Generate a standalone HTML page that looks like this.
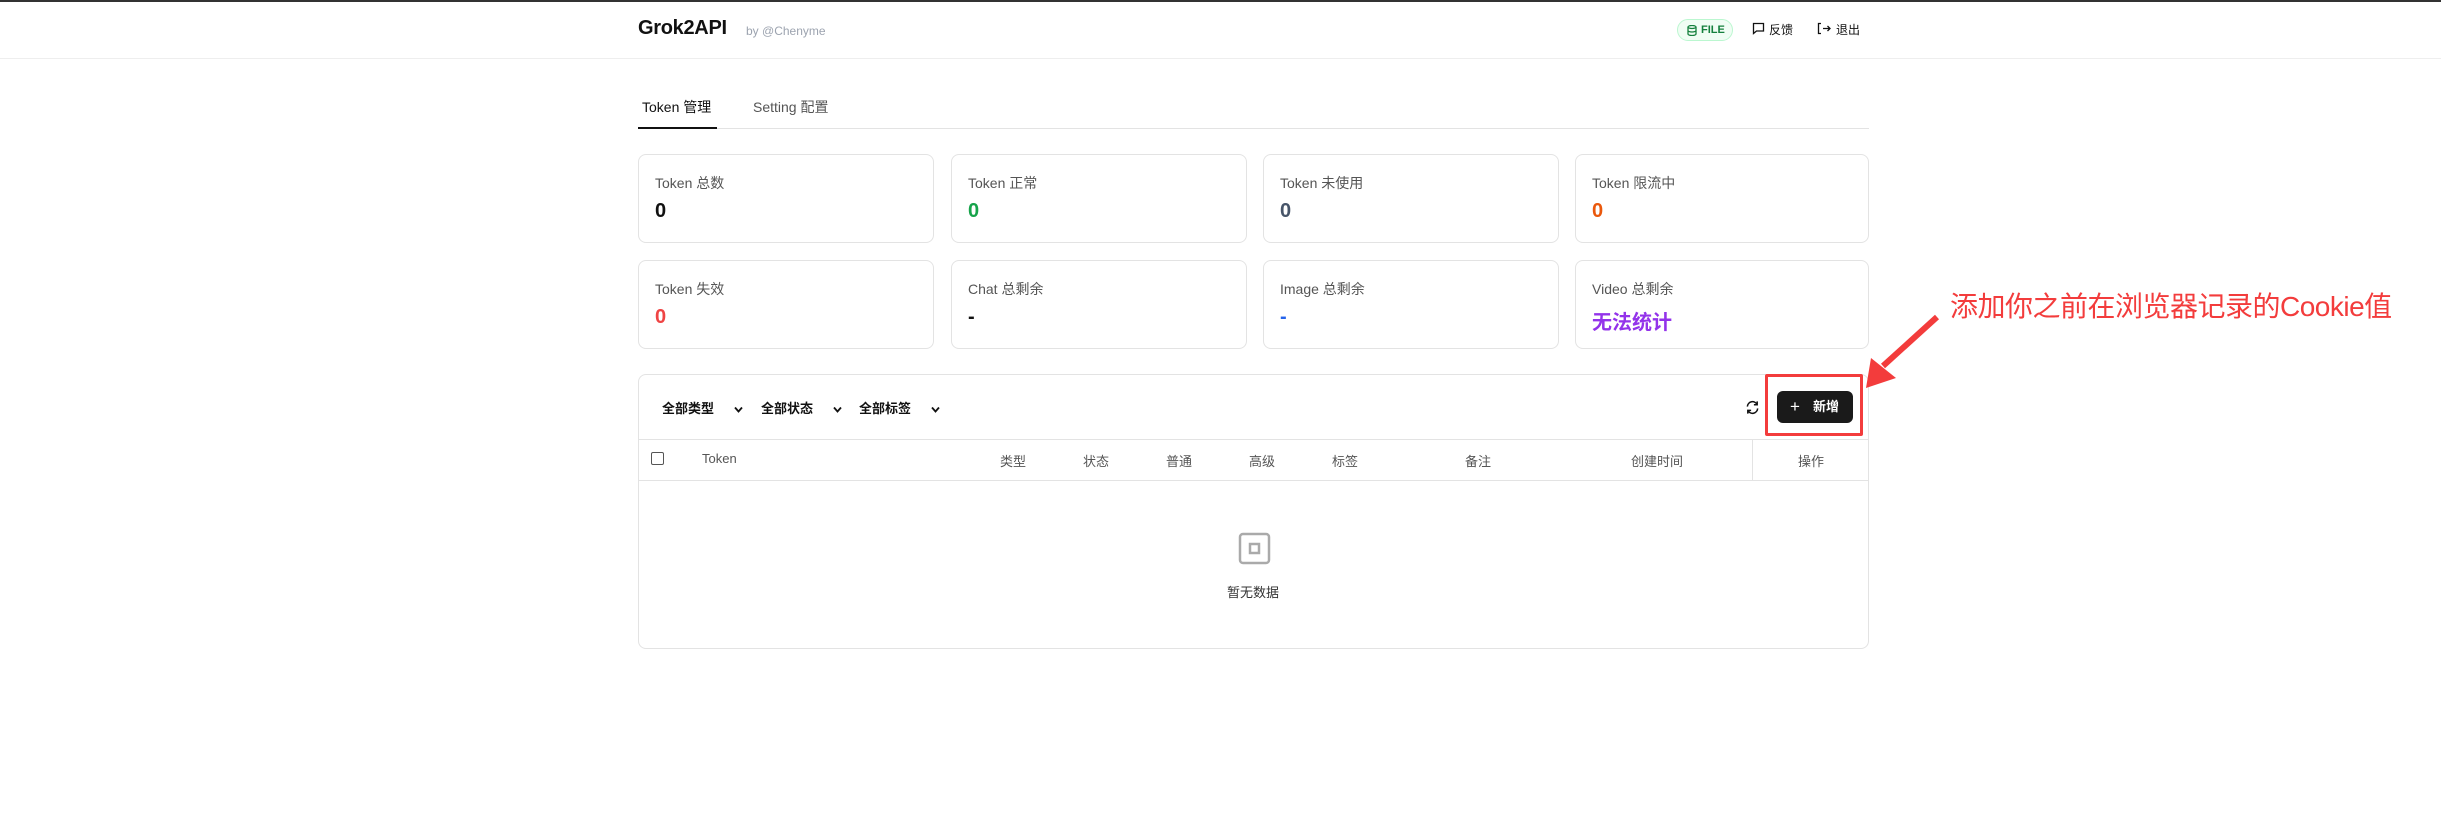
<!DOCTYPE html>
<html><head><meta charset="utf-8"><style>
*{margin:0;padding:0;box-sizing:border-box}
body{width:2441px;height:829px;background:#fff;position:relative;overflow:hidden;font-family:"Liberation Sans","Noto Sans CJK SC",sans-serif;color:#111}
.a{position:absolute;white-space:nowrap}
.card{position:absolute;border:1px solid #e3e3e3;border-radius:8px;background:#fff;width:296px;height:89px}
.card .l{position:absolute;left:16px;top:18px;font-size:14px;color:#555}
.card .v{position:absolute;left:16px;top:45px;font-size:20px;font-weight:bold}
.th{position:absolute;top:451px;font-size:13px;color:#555}
.chev{position:absolute;top:8px}
</style></head><body>
<div class="a" style="left:0;top:0;width:2441px;height:2px;background:#333"></div>
<div class="a" style="left:0;top:58px;width:2441px;height:1px;background:#eee"></div>
<div class="a" style="left:638px;top:17px;font-size:20px;font-weight:bold;letter-spacing:-0.3px">Grok2API</div>
<div class="a" style="left:746px;top:24px;font-size:12px;color:#9ca3af">by @Chenyme</div>
<div class="a" style="left:1677px;top:19px;width:56px;height:22px;border:1px solid #bbf7d0;background:#f0fdf4;border-radius:11px;color:#15803d;font-size:11px;font-weight:bold;padding-left:23px;line-height:20px">FILE
<svg style="position:absolute;left:9px;top:5px" width="10" height="11" viewBox="0 0 10 11" fill="none" stroke="#15803d" stroke-width="1.3"><ellipse cx="5" cy="2" rx="4" ry="1.5"/><path d="M1 2v7c0 .8 1.8 1.5 4 1.5s4-.7 4-1.5V2M1 5.5c0 .8 1.8 1.5 4 1.5s4-.7 4-1.5"/></svg></div>
<svg class="a" style="left:1752px;top:22px" width="13" height="13" viewBox="0 0 13 13" fill="none" stroke="#111" stroke-width="1.3"><path d="M1.5 1.5h10v7.5h-7l-3 2.5z"/></svg>
<div class="a" style="left:1769px;top:21px;font-size:12px">反馈</div>
<svg class="a" style="left:1817px;top:22px" width="14" height="13" viewBox="0 0 14 13" fill="none" stroke="#111" stroke-width="1.3"><path d="M4 1.5H1.5v10H4M6 6.5h7M10.5 4l2.5 2.5-2.5 2.5"/></svg>
<div class="a" style="left:1836px;top:21px;font-size:12px">退出</div>

<div class="a" style="left:642px;top:97px;font-size:14px;color:#111">Token 管理</div>
<div class="a" style="left:753px;top:97px;font-size:14px;color:#555">Setting 配置</div>
<div class="a" style="left:638px;top:128px;width:1231px;height:1px;background:#e3e3e3"></div>
<div class="a" style="left:638px;top:127px;width:79px;height:2px;background:#111"></div>

<div class="card" style="left:638px;top:154px"><div class="l">Token 总数</div><div class="v">0</div></div>
<div class="card" style="left:951px;top:154px"><div class="l">Token 正常</div><div class="v" style="color:#16a34a">0</div></div>
<div class="card" style="left:1263px;top:154px"><div class="l">Token 未使用</div><div class="v" style="color:#475569">0</div></div>
<div class="card" style="left:1575px;top:154px;width:294px"><div class="l">Token 限流中</div><div class="v" style="color:#ea580c">0</div></div>
<div class="card" style="left:638px;top:260px"><div class="l">Token 失效</div><div class="v" style="color:#ef4444">0</div></div>
<div class="card" style="left:951px;top:260px"><div class="l">Chat 总剩余</div><div class="v">-</div></div>
<div class="card" style="left:1263px;top:260px"><div class="l">Image 总剩余</div><div class="v" style="color:#2563eb">-</div></div>
<div class="card" style="left:1575px;top:260px;width:294px"><div class="l">Video 总剩余</div><div class="v" style="color:#9333ea">无法统计</div></div>

<div class="a" style="left:638px;top:374px;width:1231px;height:275px;border:1px solid #e3e3e3;border-radius:8px"></div>
<div class="a" style="left:638px;top:439px;width:1231px;height:1px;background:#e3e3e3"></div>
<div class="a" style="left:638px;top:480px;width:1231px;height:1px;background:#e3e3e3"></div>
<div class="a" style="left:1752px;top:440px;width:1px;height:40px;background:#e3e3e3"></div>
<div class="a" style="left:662px;top:398px;font-size:13px;font-weight:bold;width:90px;height:20px">全部类型<svg class="chev" style="left:72px" width="9" height="7" viewBox="0 0 9 7" fill="none" stroke="#111" stroke-width="1.8"><path d="M1 1.5l3.5 4 3.5-4"/></svg></div>
<div class="a" style="left:761px;top:398px;font-size:13px;font-weight:bold;width:90px;height:20px">全部状态<svg class="chev" style="left:72px" width="9" height="7" viewBox="0 0 9 7" fill="none" stroke="#111" stroke-width="1.8"><path d="M1 1.5l3.5 4 3.5-4"/></svg></div>
<div class="a" style="left:859px;top:398px;font-size:13px;font-weight:bold;width:90px;height:20px">全部标签<svg class="chev" style="left:72px" width="9" height="7" viewBox="0 0 9 7" fill="none" stroke="#111" stroke-width="1.8"><path d="M1 1.5l3.5 4 3.5-4"/></svg></div>
<svg class="a" style="left:1745px;top:400px" width="15" height="15" viewBox="0 0 16 16" fill="none" stroke="#111" stroke-width="1.6"><path d="M2.5 7A5.5 5.5 0 0 1 13 5M13.5 9A5.5 5.5 0 0 1 3 11M13 1.5V5H9.5M3 14.5V11h3.5"/></svg>
<div class="a" style="left:1777px;top:391px;width:76px;height:32px;background:#1a1a1a;border-radius:6px;color:#fff;font-size:13px;font-weight:bold;line-height:32px;padding-left:36px">新增
<span style="position:absolute;left:13px;top:0;font-weight:normal;font-size:17px">+</span></div>
<div class="a" style="left:1765px;top:374px;width:98px;height:62px;border:3px solid #f33c3c;border-radius:2px"></div>

<div class="a" style="left:651px;top:452px;width:13px;height:13px;border:1px solid #555;border-radius:2px"></div>
<div class="th" style="left:702px">Token</div>
<div class="th" style="left:1000px">类型</div>
<div class="th" style="left:1083px">状态</div>
<div class="th" style="left:1166px">普通</div>
<div class="th" style="left:1249px">高级</div>
<div class="th" style="left:1332px">标签</div>
<div class="th" style="left:1465px">备注</div>
<div class="th" style="left:1631px">创建时间</div>
<div class="th" style="left:1798px">操作</div>

<svg class="a" style="left:1238px;top:532px" width="33" height="33" viewBox="0 0 33 33" fill="none" stroke="#aaa" stroke-width="2.5"><rect x="2" y="2" width="29" height="29" rx="3"/><rect x="12" y="12" width="9" height="9"/></svg>
<div class="a" style="left:1227px;top:582px;font-size:13px;color:#333">暂无数据</div>

<div class="a" style="left:1950px;top:285px;font-size:28px;color:#f33c3c;letter-spacing:-0.5px">添加你之前在浏览器记录的Cookie值</div>
<svg class="a" style="left:0;top:0" width="2441" height="829"><path d="M1937 317 L1883 366" stroke="#f33c3c" stroke-width="6"/><polygon points="1866,388 1871,358 1896,378" fill="#f33c3c"/></svg>
</body></html>
